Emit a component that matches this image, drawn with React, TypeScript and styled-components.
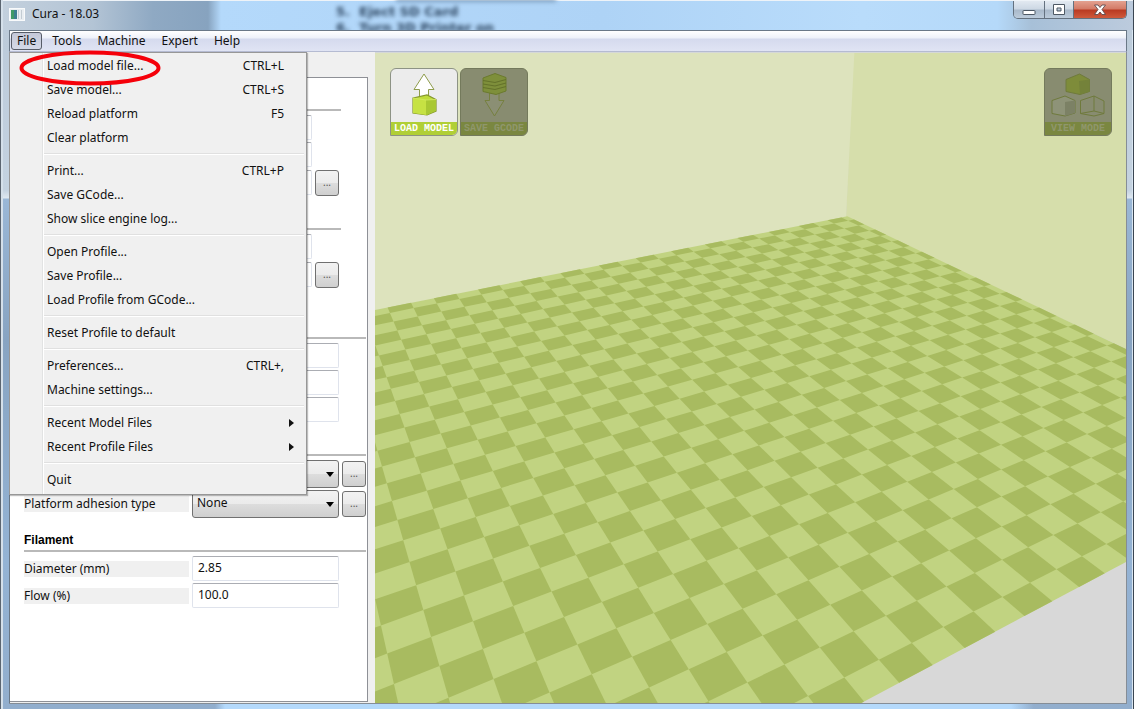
import React from 'react';
import styled, { createGlobalStyle, css } from 'styled-components';

const Global = createGlobalStyle`
  *, *::before, *::after { box-sizing: border-box; }
  body { margin: 0; background: #fff; }
  button, input, select { font: inherit; color: inherit; margin: 0; }
`;

/* ---------- window frame ---------- */

const Window = styled.div`
  position: relative;
  display: grid;
  grid-template-columns: minmax(0, 1fr);
  grid-template-rows: 30px 22px 1fr;
  min-height: 100vh;
  padding: 0 9px 5px 9px;
  overflow: hidden;
  color: #111;
  font: 12px/16px "Noto Sans", "Open Sans", sans-serif;
  background:
    linear-gradient(90deg, #5b6570 0 1px, #d5e0ea 1px 3px, transparent 3px calc(100% - 4px), #d9e6f2 calc(100% - 4px) calc(100% - 3px), #3b4652 calc(100% - 3px) calc(100% - 2px), #fff calc(100% - 2px)),
    linear-gradient(90deg, transparent 215px, #b4d9fb 225px 89%, transparent 91%) 0 100% / 100% 5px no-repeat,
    linear-gradient(#bccbda 0 30px, #c4d2e0 190px, #dfe8f0 198px, #9ab7d6 199px, #88a4c2 340px, #94b3d4 560px, #92aecd 100%);
`;

const TitleBar = styled.header`
  position: relative;
  display: flex;
  justify-content: space-between;
  margin: 0 -6px 0 -6px;
  padding: 0 6px;
  border-top: 1px solid #eef3f8;
  background: linear-gradient(90deg, #c3d0dd 0, #b3c4d5 90px, #8fa9c3 150px, #87a3bf 205px, #b4d9fb 218px, #aed3f6 600px, #b9dcfb 76%, #b5d9f9 88%, #a7c0d8 91%, #bccbdd 100%);
`;

const Title = styled.h1`
  display: flex;
  align-items: center;
  gap: 6px;
  height: 26px;
  margin: 0;
  font-size: 12px;
  font-weight: 400;
`;

const Behind = styled.div`
  position: absolute;
  left: 333px;
  top: 3px;
  color: #2c4560;
  font: bold 13px/16px "DejaVu Sans", sans-serif;
  filter: blur(2px);
  white-space: pre;
  &::before {
    content: "";
    position: absolute;
    left: 60px;
    top: -6px;
    width: 160px;
    height: 4px;
    background: #7f9fbf;
  }
`;

const Captions = styled.div`
  display: flex;
  height: 18px;
  border: 1px solid #64717f;
  border-top: 0;
  border-radius: 0 0 5px 5px;
  overflow: hidden;
`;

const CaptionButton = styled.button<{ $w: number; $close?: boolean }>`
  display: grid;
  place-items: center;
  width: ${p => p.$w}px;
  padding: 0;
  border: 0;
  border-left: ${p => (p.$w === 30 ? '0' : '1px solid #64717f')};
  background: ${p =>
    p.$close
      ? 'linear-gradient(#e3a190 0, #d37a66 8px, #b93a22 9px, #cf5a3c 100%)'
      : 'linear-gradient(#e2e9f1 0, #cdd8e4 8px, #a9b9ca 9px, #bccbda 100%)'};
`;

const MenuBar = styled.nav`
  position: relative;
  display: flex;
  align-items: center;
  padding: 0 1px;
  border: 1px solid #6a7887;
  border-bottom-color: #b5bbd2;
  background: linear-gradient(#fff 0, #eef1f9 7px, #d5daee 8px, #e0e4f4 100%);
`;

const MenuTitle = styled.button<{ $open?: boolean }>`
  height: 18px;
  padding: 0 7px;
  border: 1px solid transparent;
  border-radius: 3px;
  font-size: 12px;
  line-height: 16px;
  background: none;
  ${p => p.$open && css`
    padding: 0 5px;
    margin-right: 2px;
    border-color: #575c68;
    background: linear-gradient(#c4c8d8, #d5d9e8);
  `}
`;

const Main = styled.main`
  display: grid;
  grid-template-columns: 366px minmax(0, 1fr);
  border: solid #858d96;
  border-width: 0 1px 1px 0;
`;

/* ---------- settings panel ---------- */

const Sidebar = styled.aside`
  padding: 25px 7px 1px 0;
  background: #f0f0f0;
  border-left: 1px solid #6a7887;
`;

const Panel = styled.form`
  height: 100%;
  padding: 0 0 0 14px;
  border: 1px solid #8e9096;
  border-left: 0;
  background: #fff;
`;

const Section = styled.section<{ $narrow?: boolean; $tail?: boolean }>`
  display: grid;
  row-gap: 2px;
  width: ${p => (p.$narrow ? 317 : 342)}px;
  padding-bottom: ${p => (p.$tail ? 17 : 0)}px;
`;

const Heading = styled.h2`
  height: 34px;
  margin: 0 0 2px;
  padding-top: 14px;
  border-bottom: 2px solid #b9b9b9;
  color: #000;
  font: bold 12px/16px "Liberation Sans", sans-serif;
  section:first-child > & { height: 33px; }
`;

const Row = styled.div<{ $narrow?: boolean; $more?: boolean }>`
  display: grid;
  grid-template-columns: 165px ${p => (p.$narrow ? 120 : 147)}px 24px;
  column-gap: 3px;
  align-items: center;
  min-height: ${p => (p.$more ? 27 : 25)}px;
`;

const Label = styled.label`
  height: 16px;
  background: #f0f0f0;
`;

const Field = styled.input`
  width: 100%;
  height: 25px;
  padding: 0 5px 2px;
  border: 1px solid #dfe3ec;
  border-top-color: #abadb3;
  border-radius: 2px;
  background: #fff;
`;

const SelectBox = styled.div`
  position: relative;
  &::after {
    content: "";
    position: absolute;
    right: 5px;
    top: 12px;
    border: 4px solid transparent;
    border-top: 5px solid #000;
    border-bottom: 0;
    pointer-events: none;
  }
`;

const Select = styled.select`
  appearance: none;
  display: block;
  width: 100%;
  height: 28px;
  padding: 0 4px 2px;
  border: 1px solid #707070;
  border-radius: 3px;
  background: linear-gradient(#f2f2f2 0, #ebebeb 49%, #dddddd 50%, #cfcfcf 100%);
`;

const More = styled.button`
  height: 26px;
  padding: 0 0 2px;
  border: 1px solid #707070;
  border-radius: 3px;
  color: #555;
  font-size: 10px;
  line-height: 16px;
  background: linear-gradient(#f2f2f2 0, #ebebeb 49%, #dddddd 50%, #cfcfcf 100%);
`;

type Item = { id: string; label?: string; name: string; value?: string; select?: boolean; more?: boolean };
type Group = { title?: string; name: string; narrow?: boolean; tail?: boolean; items: Item[] };

const groups: Group[] = [
  { name: 'Quality', narrow: true, items: [
    { id: 'layer', name: 'Layer height (mm)' },
    { id: 'shell', name: 'Shell thickness (mm)' },
    { id: 'retract', name: 'Enable retraction', more: true },
  ] },
  { name: 'Fill', narrow: true, tail: true, items: [
    { id: 'bottom', name: 'Bottom/Top thickness (mm)' },
    { id: 'density', name: 'Fill density (%)', more: true },
  ] },
  { name: 'Speed', items: [
    { id: 'speed', name: 'Print speed (mm/s)' },
    { id: 'temp', name: 'Printing temperature' },
    { id: 'bed', name: 'Bed temperature' },
  ] },
  { name: 'Support', items: [
    { id: 'support', name: 'Support type', select: true, more: true },
    { id: 'adhesion', label: 'Platform adhesion type', name: 'Platform adhesion type', value: 'None', select: true, more: true },
  ] },
  { title: 'Filament', name: 'Filament', items: [
    { id: 'diameter', label: 'Diameter (mm)', name: 'Diameter (mm)', value: '2.85' },
    { id: 'flow', label: 'Flow (%)', name: 'Flow (%)', value: '100.0' },
  ] },
];

const Settings = () => (
  <Panel>
    {groups.map(g => (
      <Section key={g.name} aria-label={g.name} $narrow={g.narrow} $tail={g.tail}>
        <Heading>{g.title}</Heading>
        {g.items.map(it => (
          <Row key={it.id} $narrow={g.narrow} $more={it.more}>
            <Label htmlFor={it.id}>{it.label}</Label>
            {it.select ? (
              <SelectBox>
                <Select id={it.id} aria-label={it.name}>{it.value && <option>{it.value}</option>}</Select>
              </SelectBox>
            ) : (
              <Field id={it.id} aria-label={it.name} defaultValue={it.value} />
            )}
            {it.more && <More type="button" aria-label={`${it.name} options`}>...</More>}
          </Row>
        ))}
      </Section>
    ))}
  </Panel>
);

/* ---------- file menu ---------- */

const Menu = styled.div`
  position: absolute;
  left: 9px;
  top: 52px;
  width: 298px;
  padding: 1px 1px 2px;
  border: 1px solid #979797;
  background: linear-gradient(90deg, #f0f0f0 32px, #e2e3e3 32px 33px, #fff 33px 34px, #f0f0f0 34px);
  box-shadow: 1px 1px 1px rgba(0, 0, 0, 0.25);
`;

const MenuItem = styled.button`
  display: flex;
  align-items: center;
  justify-content: space-between;
  width: 100%;
  height: 24px;
  padding: 0 21px 0 36px;
  border: 0;
  font-size: 12px;
  line-height: 16px;
  text-align: left;
  background: none;
`;

const Divider = styled.hr`
  height: 2px;
  margin: 3px 1px 4px 33px;
  border: 0;
  border-top: 1px solid #e0e0e0;
  border-bottom: 1px solid #fff;
`;

const SubArrow = styled.span`
  margin-right: -10px;
  border: 4px solid transparent;
  border-left: 5px solid #111;
  border-right: 0;
`;

const menuGroups: [string, string?][][] = [
  [['Load model file...', 'CTRL+L'], ['Save model...', 'CTRL+S'], ['Reload platform', 'F5'], ['Clear platform']],
  [['Print...', 'CTRL+P'], ['Save GCode...'], ['Show slice engine log...']],
  [['Open Profile...'], ['Save Profile...'], ['Load Profile from GCode...']],
  [['Reset Profile to default']],
  [['Preferences...', 'CTRL+,'], ['Machine settings...']],
  [['Recent Model Files', '>'], ['Recent Profile Files', '>']],
  [['Quit']],
];

const FileMenu = () => (
  <Menu role="menu" aria-label="File">
    {menuGroups.map((items, g) => (
      <React.Fragment key={g}>
        {g > 0 && <Divider />}
        {items.map(([text, key]) => (
          <MenuItem key={text} role="menuitem">
            <span>{text}</span>
            {key === '>' ? <SubArrow /> : key && <span>{key}</span>}
          </MenuItem>
        ))}
      </React.Fragment>
    ))}
  </Menu>
);

const Highlight = styled.svg`
  position: absolute;
  left: 18px;
  top: 49px;
  width: 144px;
  height: 38px;
  pointer-events: none;
`;

/* ---------- 3D view ---------- */

const View = styled.section`
  position: relative;
  display: flex;
  justify-content: space-between;
  align-items: flex-start;
  padding: 15px 14px 0 15px;
  border-top: 1px solid #d5d8d8;
  background: #d8d8d8;
`;

const Scene = styled.svg`
  position: absolute;
  inset: 0;
  width: 100%;
  height: 100%;
`;

const Tools = styled.div`
  position: relative;
  display: flex;
  gap: 2px;
`;

const Tool = styled.button<{ $off?: boolean }>`
  display: flex;
  flex-direction: column;
  width: 68px;
  height: 68px;
  padding: 0;
  border: 1px solid ${p => (p.$off ? '#747a5c' : '#8d9385')};
  border-radius: 6px 6px 6px 0;
  overflow: hidden;
  background: ${p => (p.$off ? '#888c70' : '#ececec')};
  svg { display: block; width: 66px; height: 53px; }
`;

const ToolName = styled.span<{ $off?: boolean }>`
  width: 100%;
  height: 13px;
  font: bold 10px/13px "Liberation Mono", monospace;
  text-align: center;
  white-space: nowrap;
  color: ${p => (p.$off ? '#8f966c' : '#fff')};
  background: ${p => (p.$off ? '#7a8740' : '#b0cf36')};
`;

/* plane-to-screen projection of the build platform, one unit per tile */
const project = (i: number, j: number) => {
  const w = 0.0401772326 * i + 0.0233721007 * j + 1;
  const x = 750 + (-21.1069362 * i + 36.7707148 * j + 128.871388) / w;
  const y = 450 + (-21.3025544 * i - 12.301925 * j + 209.847067) / w;
  return `${x.toFixed(2)},${y.toFixed(2)}`;
};
const NEAR = -0.75, FAR = 26.66, LEFT = -16, RIGHT = 18.42;
const quad = (i0: number, i1: number, j0: number, j1: number) =>
  [project(i0, j0), project(i0, j1), project(i1, j1), project(i1, j0)].join(' ');

const darkTiles: string[] = [];
for (let i = -1; i < 27; i++) {
  for (let j = LEFT; j < 19; j++) {
    if ((i + j) % 2 === 0) continue;
    darkTiles.push(quad(Math.max(i, NEAR), Math.min(i + 1, FAR), j, Math.min(j + 1, RIGHT)));
  }
}

const Platform = () => (
  <Scene viewBox="375 53 751 650" preserveAspectRatio="xMinYMin slice" aria-hidden="true">
    <polygon points="300,40 856,40 846,218 300,325" fill="#dde3bd" />
    <polygon points="855,40 2000,40 2000,760 846,217" fill="#d6deab" />
    <polygon points={quad(NEAR, FAR, LEFT, RIGHT)} fill="#c1d381" />
    {darkTiles.map(p => <polygon key={p} points={p} fill="#a8bb60" />)}
  </Scene>
);

const LoadIcon = () => (
  <svg viewBox="0 0 66 53">
    <path d="M33 5 L43 20.5 H37.5 V30 H28.500 V20.500 H23 Z" fill="#fff" stroke="#8e9c4c" strokeWidth="1" />
    <path d="M22 29 L36 26 L45 30.500 V42 L36 46 L22 44 Z" fill="#bfdc3c" stroke="#84962c" strokeWidth="1.200" />
    <path d="M22 29 L35 31 V46 L22 44 Z" fill="#c6e243" />
    <path d="M35 31 L45 30.500 V42 L36 46 H35 Z" fill="#a9c833" />
    <path d="M22 29 L35 31 L45 30.500" fill="none" stroke="#d3ea63" strokeWidth="0.800" />
  </svg>
);

const SaveIcon = () => (
  <svg viewBox="0 0 66 53">
    <path d="M28.500 24 H38 V31.500 H43 L33.500 47 L24 31.500 H28.500 Z" fill="#8b8f74" stroke="#76803f" strokeWidth="1" />
    <path d="M22 9 L34 4.500 L45 8.500 V22 L35 25.500 L22 22.500 Z" fill="#7e8f3b" stroke="#6b7a2e" strokeWidth="1" />
    <path d="M22 11.500 L34 13.500 L45 10.500 M22 15 L34 17 L45 14 M22 18.500 L34 20.500 L45 17.500" fill="none" stroke="#64722b" strokeWidth="1.200" />
  </svg>
);

const ViewIcon = () => (
  <svg viewBox="0 0 66 53" fill="none" stroke="#6f7a3c" strokeWidth="1">
    <path d="M21 10.500 L34.500 5 L44.500 10.500 V22.500 L35 25.500 L21 22.500 Z" fill="#7e8c3a" />
    <path d="M34 12 L44.500 10.500 V22.500 L35 25.500 Z" fill="#74823a" stroke="none" />
    <path d="M7 31.500 L20 27 L30 31.500 V44 L20 47 L7 44.500 Z" fill="#8e9378" />
    <path d="M20 33 L30 31.500 V44 L20 47 Z" fill="#7c8165" stroke="none" />
    <path d="M35.500 31.500 L49 27 L59 32 V44.500 L49 47 L35.500 44.500 Z" />
    <path d="M49 27 V42 L35.500 44.500 M49 42 L59 44.500" />
  </svg>
);

const AppIcon = () => (
  <svg width="17" height="13" viewBox="0 0 17 13" aria-hidden="true">
    <rect x="0.500" y="0.500" width="15" height="12" fill="#e9eef2" stroke="#f8fafb" />
    <rect x="2" y="2" width="6" height="9" fill="#3c7f8f" />
    <rect x="2" y="2" width="3" height="9" fill="#3f9a66" />
    <path d="M9.500 2 V11 M12.500 2 V11" stroke="#c3ccd3" />
  </svg>
);

export default function App() {
  return (
    <Window>
      <Global />
      <TitleBar>
        <Behind aria-hidden="true">{'5.  Eject SD Card\n6.  Turn 3D Printer on'}</Behind>
        <Title><AppIcon />Cura - 18.03</Title>
        <Captions>
          <CaptionButton $w={30} aria-label="Minimize">
            <svg width="14" height="14" viewBox="0 0 14 14"><rect x="1" y="7.500" width="12" height="4" rx="0.500" fill="#fff" stroke="#4d5864" /></svg>
          </CaptionButton>
          <CaptionButton $w={29} aria-label="Maximize">
            <svg width="14" height="14" viewBox="0 0 14 14"><path d="M1.500 1.500 H12.500 V11.500 H1.500 Z M5 5 V8 H9 V5 Z" fill="#fff" fillRule="evenodd" stroke="#4d5864" /></svg>
          </CaptionButton>
          <CaptionButton $w={53} $close aria-label="Close">
            <svg width="14" height="14" viewBox="0 0 14 14"><path d="M1.500 2 H5 L7 4.500 L9 2 H12.500 L9 6.500 L12.500 11.500 H9 L7 9 L5 11.500 H1.500 L5 6.500 Z" fill="#fff" stroke="#5e4a4c" strokeWidth="0.900" /></svg>
          </CaptionButton>
        </Captions>
      </TitleBar>
      <MenuBar>
        <MenuTitle $open aria-haspopup="menu">File</MenuTitle>
        <MenuTitle>Tools</MenuTitle>
        <MenuTitle>Machine</MenuTitle>
        <MenuTitle>Expert</MenuTitle>
        <MenuTitle>Help</MenuTitle>
      </MenuBar>
      <Main>
        <Sidebar><Settings /></Sidebar>
        <View>
          <Platform />
          <Tools>
            <Tool><LoadIcon /><ToolName>LOAD MODEL</ToolName></Tool>
            <Tool $off><SaveIcon /><ToolName $off>SAVE GCODE</ToolName></Tool>
          </Tools>
          <Tools>
            <Tool $off><ViewIcon /><ToolName $off>VIEW MODE</ToolName></Tool>
          </Tools>
        </View>
      </Main>
      <FileMenu />
      <Highlight viewBox="0 0 144 38" aria-hidden="true">
        <ellipse cx="72" cy="19" rx="68.500" ry="15.500" fill="none" stroke="#f5000a" strokeWidth="4" />
      </Highlight>
    </Window>
  );
}
